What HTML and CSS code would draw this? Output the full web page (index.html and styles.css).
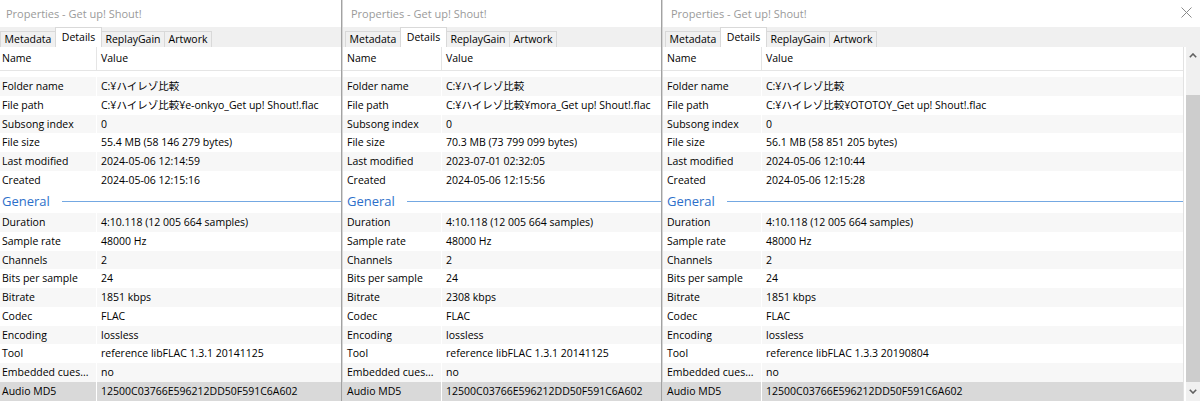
FILE: index.html
```html
<!DOCTYPE html>
<html lang="ja">
<head>
<meta charset="utf-8">
<title>Properties - Get up! Shout!</title>
<link rel="stylesheet" href="styles.css">
</head>
<body>
<div class="screen">

  <div class="panel p1">
    <div class="window">
      <div class="titlebar"><span class="title">Properties - Get up! Shout!</span></div>
      <div class="tabs">
        <div class="tab w-meta">Metadata</div>
        <div class="tab sel w-det">Details</div>
        <div class="tab w-rg">ReplayGain</div>
        <div class="tab w-art">Artwork</div>
      </div>
      <div class="listwrap">
        <div class="list">
          <div class="head"><span class="n">Name</span><span class="v">Value</span></div>
          <div class="viewport">
            <div class="body">
              <div class="row alt"><span class="n">Folder name</span><span class="v">C:¥<span class="ja">ハイレゾ比較</span></span></div>
              <div class="row"><span class="n">File path</span><span class="v">C:¥<span class="ja">ハイレゾ比較</span>¥e-onkyo_Get up! Shout!.flac</span></div>
              <div class="row alt"><span class="n">Subsong index</span><span class="v">0</span></div>
              <div class="row"><span class="n">File size</span><span class="v">55.4 MB (58 146 279 bytes)</span></div>
              <div class="row alt"><span class="n">Last modified</span><span class="v">2024-05-06 12:14:59</span></div>
              <div class="row"><span class="n">Created</span><span class="v">2024-05-06 12:15:16</span></div>
              <div class="group">General</div>
              <div class="row alt"><span class="n">Duration</span><span class="v">4:10.118 (12 005 664 samples)</span></div>
              <div class="row"><span class="n">Sample rate</span><span class="v">48000 Hz</span></div>
              <div class="row alt"><span class="n">Channels</span><span class="v">2</span></div>
              <div class="row"><span class="n">Bits per sample</span><span class="v">24</span></div>
              <div class="row alt"><span class="n">Bitrate</span><span class="v">1851 kbps</span></div>
              <div class="row"><span class="n">Codec</span><span class="v">FLAC</span></div>
              <div class="row alt"><span class="n">Encoding</span><span class="v">lossless</span></div>
              <div class="row"><span class="n">Tool</span><span class="v">reference libFLAC 1.3.1 20141125</span></div>
              <div class="row alt"><span class="n">Embedded cues...</span><span class="v">no</span></div>
              <div class="row sel"><span class="n">Audio MD5</span><span class="v">12500C03766E596212DD50F591C6A602</span></div>
            </div>
          </div>
        </div>
      </div>
    </div>
  </div>

  <div class="panel p2">
    <div class="window">
      <div class="titlebar"><span class="title">Properties - Get up! Shout!</span></div>
      <div class="tabs">
        <div class="tab w-meta">Metadata</div>
        <div class="tab sel w-det">Details</div>
        <div class="tab w-rg">ReplayGain</div>
        <div class="tab w-art">Artwork</div>
      </div>
      <div class="listwrap">
        <div class="list">
          <div class="head"><span class="n">Name</span><span class="v">Value</span></div>
          <div class="viewport">
            <div class="body">
              <div class="row alt"><span class="n">Folder name</span><span class="v">C:¥<span class="ja">ハイレゾ比較</span></span></div>
              <div class="row"><span class="n">File path</span><span class="v">C:¥<span class="ja">ハイレゾ比較</span>¥mora_Get up! Shout!.flac</span></div>
              <div class="row alt"><span class="n">Subsong index</span><span class="v">0</span></div>
              <div class="row"><span class="n">File size</span><span class="v">70.3 MB (73 799 099 bytes)</span></div>
              <div class="row alt"><span class="n">Last modified</span><span class="v">2023-07-01 02:32:05</span></div>
              <div class="row"><span class="n">Created</span><span class="v">2024-05-06 12:15:56</span></div>
              <div class="group">General</div>
              <div class="row alt"><span class="n">Duration</span><span class="v">4:10.118 (12 005 664 samples)</span></div>
              <div class="row"><span class="n">Sample rate</span><span class="v">48000 Hz</span></div>
              <div class="row alt"><span class="n">Channels</span><span class="v">2</span></div>
              <div class="row"><span class="n">Bits per sample</span><span class="v">24</span></div>
              <div class="row alt"><span class="n">Bitrate</span><span class="v">2308 kbps</span></div>
              <div class="row"><span class="n">Codec</span><span class="v">FLAC</span></div>
              <div class="row alt"><span class="n">Encoding</span><span class="v">lossless</span></div>
              <div class="row"><span class="n">Tool</span><span class="v">reference libFLAC 1.3.1 20141125</span></div>
              <div class="row alt"><span class="n">Embedded cues...</span><span class="v">no</span></div>
              <div class="row sel"><span class="n">Audio MD5</span><span class="v">12500C03766E596212DD50F591C6A602</span></div>
            </div>
          </div>
        </div>
      </div>
    </div>
  </div>

  <div class="panel p3">
    <div class="window">
      <div class="titlebar">
        <span class="title">Properties - Get up! Shout!</span>
        <svg class="close" width="11" height="11" viewBox="0 0 11 11" aria-label="Close"><path d="M0.5 0.5 L10.5 10.5 M10.5 0.5 L0.5 10.5" stroke="#8a8a8a" stroke-width="1" fill="none"/></svg>
      </div>
      <div class="tabs">
        <div class="tab w-meta">Metadata</div>
        <div class="tab sel w-det">Details</div>
        <div class="tab w-rg">ReplayGain</div>
        <div class="tab w-art">Artwork</div>
      </div>
      <div class="listwrap">
        <div class="list">
          <div class="head"><span class="n">Name</span><span class="v">Value</span></div>
          <div class="viewport">
            <div class="body">
              <div class="row alt"><span class="n">Folder name</span><span class="v">C:¥<span class="ja">ハイレゾ比較</span></span></div>
              <div class="row"><span class="n">File path</span><span class="v">C:¥<span class="ja">ハイレゾ比較</span>¥OTOTOY_Get up! Shout!.flac</span></div>
              <div class="row alt"><span class="n">Subsong index</span><span class="v">0</span></div>
              <div class="row"><span class="n">File size</span><span class="v">56.1 MB (58 851 205 bytes)</span></div>
              <div class="row alt"><span class="n">Last modified</span><span class="v">2024-05-06 12:10:44</span></div>
              <div class="row"><span class="n">Created</span><span class="v">2024-05-06 12:15:28</span></div>
              <div class="group">General</div>
              <div class="row alt"><span class="n">Duration</span><span class="v">4:10.118 (12 005 664 samples)</span></div>
              <div class="row"><span class="n">Sample rate</span><span class="v">48000 Hz</span></div>
              <div class="row alt"><span class="n">Channels</span><span class="v">2</span></div>
              <div class="row"><span class="n">Bits per sample</span><span class="v">24</span></div>
              <div class="row alt"><span class="n">Bitrate</span><span class="v">1851 kbps</span></div>
              <div class="row"><span class="n">Codec</span><span class="v">FLAC</span></div>
              <div class="row alt"><span class="n">Encoding</span><span class="v">lossless</span></div>
              <div class="row"><span class="n">Tool</span><span class="v">reference libFLAC 1.3.3 20190804</span></div>
              <div class="row alt"><span class="n">Embedded cues...</span><span class="v">no</span></div>
              <div class="row sel"><span class="n">Audio MD5</span><span class="v">12500C03766E596212DD50F591C6A602</span></div>
            </div>
          </div>
        </div>
        <div class="scrollbar">
          <div class="sb-up"><svg width="8" height="5" viewBox="0 0 8 5"><path d="M0.8 4.2 L4 1 L7.2 4.2" stroke="#606060" stroke-width="1.6" fill="none"/></svg></div>
          <div class="sb-track"></div>
          <div class="sb-thumb"></div>
          <div class="sb-down"><svg width="8" height="5" viewBox="0 0 8 5"><path d="M0.8 0.8 L4 4 L7.2 0.8" stroke="#606060" stroke-width="1.6" fill="none"/></svg></div>
        </div>
      </div>
    </div>
  </div>

</div>
</body>
</html>
```
FILE: styles.css
```css
* { box-sizing: border-box; }

html, body {
  margin: 0;
  padding: 0;
}

body {
  width: 1200px;
  height: 401px;
  overflow: hidden;
  background: #ffffff;
  color: #000000;
  font-family: "Open Sans", "Noto Sans CJK JP", sans-serif;
  font-size: 10.5px;
}

.screen {
  display: flex;
  height: 401px;
}

.panel {
  flex: none;
  height: 401px;
  overflow: hidden;
}

.p1 { width: 341px; }

.p2 {
  width: 320px;
  border-left: 1px solid #a2a2a2;
}

.p3 {
  width: 539px;
  border-left: 1px solid #a2a2a2;
}

.window {
  display: flex;
  flex-direction: column;
  height: 100%;
  background: #f0f0f0;
}

.p1 .window { margin-left: -2px; }

.p2 .window,
.p3 .window { border-left: 1px solid #d6d6d6; }

.titlebar {
  flex: none;
  height: 27px;
  background: #ffffff;
  display: flex;
  align-items: center;
  justify-content: space-between;
  padding: 0 8px 1px 8px;
  font-size: 11px;
  color: #9a9a9a;
  white-space: nowrap;
}

.close { flex: none; margin-top: -2px; }

.tabs {
  flex: none;
  height: 20px;
  display: flex;
  align-items: flex-end;
  padding-left: 2px;
  background: #f0f0f0;
}

.tab {
  flex: none;
  height: 16px;
  line-height: 15px;
  text-align: center;
  border: 1px solid #d9d9d9;
  border-bottom: none;
  border-right: none;
  background: #f0f0f0;
  white-space: nowrap;
}

.tab.w-art { border-right: 1px solid #d9d9d9; }

.tab.sel {
  height: 20px;
  line-height: 18px;
  background: #ffffff;
  border-right: 1px solid #d9d9d9;
}

.tab.sel + .tab { border-left: none; }

.w-meta { width: 55px; }
.w-det { width: 47px; }
.w-rg { width: 62px; }
.w-art { width: 48px; }

.listwrap {
  flex: 1;
  min-height: 0;
  display: flex;
  background: #ffffff;
}

.list {
  flex: 1;
  min-width: 0;
  display: flex;
  flex-direction: column;
}

.p3 .list {
  border-right: 1px solid #e2e2e2;
  margin-right: 2px;
}

.head {
  flex: none;
  display: flex;
  height: 24px;
  line-height: 23px;
  background: #ffffff;
  border-bottom: 1px solid #e5e5e5;
  white-space: nowrap;
}

.head .n {
  flex: none;
  width: 99px;
  padding-left: 4px;
  border-right: 1px solid #e5e5e5;
}

.head .v { padding-left: 4px; }

.viewport {
  flex: 1;
  min-height: 0;
  overflow: hidden;
}

.body { padding-top: 6px; }

.row {
  display: flex;
  height: 18.75px;
  line-height: 18.75px;
  white-space: nowrap;
}

.row .n {
  flex: none;
  width: 98px;
  padding-left: 4px;
  overflow: hidden;
}

.row .v {
  flex: 1;
  min-width: 0;
  padding-left: 4px;
  border-left: 1px solid #ffffff;
  overflow: hidden;
}

.row.alt { background: #f7f7f7; }
.row.sel { background: #d9d9d9; }

.ja {
  font-family: "Noto Sans CJK JP", sans-serif;
  font-size: 10.5px;
}

.group {
  display: flex;
  align-items: center;
  height: 23.5px;
  padding-left: 4px;
  font-size: 13px;
  color: #2d6fca;
  white-space: nowrap;
}

.group::after {
  content: "";
  flex: 1;
  height: 1px;
  margin-left: 12px;
  background: #74a8e2;
}

.scrollbar {
  flex: none;
  width: 14px;
  display: flex;
  flex-direction: column;
  background: #f0f0f0;
}

.sb-up {
  flex: none;
  height: 17px;
  display: flex;
  align-items: center;
  justify-content: center;
}

.sb-track {
  flex: none;
  height: 31px;
}

.sb-thumb {
  flex: 1;
  background: #cdcdcd;
}

.sb-down {
  flex: none;
  height: 19px;
  display: flex;
  align-items: center;
  justify-content: center;
}
```
